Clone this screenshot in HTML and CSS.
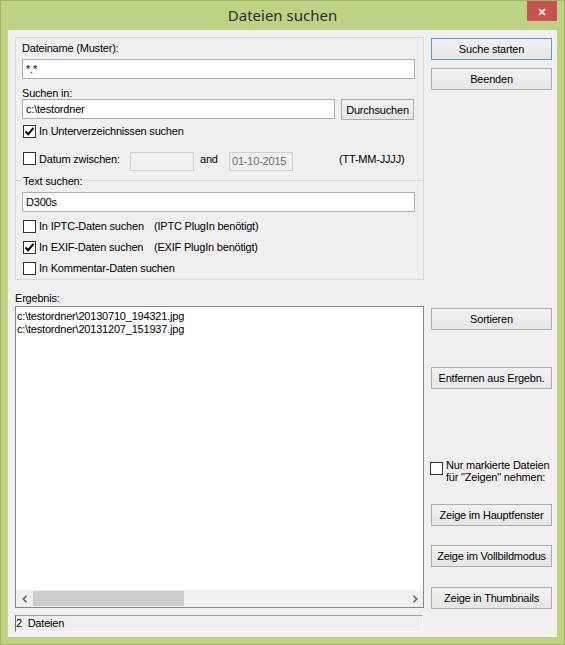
FILE: index.html
```html
<!DOCTYPE html>
<html lang="de">
<head>
<meta charset="utf-8">
<title>Dateien suchen</title>
<link rel="stylesheet" href="styles.css">
</head>
<body>
<div class="window">
  <div class="titlebar">
    <div></div>
    <div class="title">Dateien suchen</div>
    <div class="close"><svg width="8" height="8" viewBox="0 0 8 8"><path d="M1 1L7 7M7 1L1 7" stroke="#fff" stroke-width="1.7" fill="none"/></svg></div>
  </div>
  <div class="client">
    <div class="leftcol">
      <div class="panel">
        <div class="lbl l1">Dateiname (Muster):</div>
        <div class="input full i1">*.*</div>
        <div class="lbl l2">Suchen in:</div>
        <div class="row r-path">
          <div class="input path">c:\testordner</div>
          <div class="btn browse">Durchsuchen</div>
        </div>
        <div class="check r-sub">
          <span class="box"><svg width="11" height="11" viewBox="0 0 11 11"><path d="M1.5 5.5L4.2 8.2L9.5 1.8" stroke="#000" stroke-width="2" fill="none"/></svg></span>
          <span class="ctext">In Unterverzeichnissen suchen</span>
        </div>
        <div class="row r-date">
          <span class="box"></span>
          <span class="dlabel">Datum zwischen:</span>
          <div class="date"></div>
          <span class="and">and</span>
          <div class="date">01-10-2015</div>
          <span class="fmt">(TT-MM-JJJJ)</span>
        </div>
        <div class="sep"><span class="septext">Text suchen:</span></div>
        <div class="input full i3">D300s</div>
        <div class="check r-c1">
          <span class="box"></span>
          <span class="ctext wide">In IPTC-Daten suchen</span>
          <span class="ctext">(IPTC PlugIn benötigt)</span>
        </div>
        <div class="check r-c2">
          <span class="box"><svg width="11" height="11" viewBox="0 0 11 11"><path d="M1.5 5.5L4.2 8.2L9.5 1.8" stroke="#000" stroke-width="2" fill="none"/></svg></span>
          <span class="ctext wide">In EXIF-Daten suchen</span>
          <span class="ctext">(EXIF PlugIn benötigt)</span>
        </div>
        <div class="check r-c2">
          <span class="box"></span>
          <span class="ctext">In Kommentar-Daten suchen</span>
        </div>
      </div>
      <div class="lbl erg">Ergebnis:</div>
      <div class="list">
        <div class="items">
          <div>c:\testordner\20130710_194321.jpg</div>
          <div>c:\testordner\20131207_151937.jpg</div>
        </div>
        <div class="hscroll">
          <div class="arrow"><svg width="6" height="8" viewBox="0 0 6 8"><path d="M4.5 0.8L1.3 4L4.5 7.2" stroke="#606060" stroke-width="1.6" fill="none"/></svg></div>
          <div class="thumb"></div>
          <div class="track"></div>
          <div class="arrow"><svg width="6" height="8" viewBox="0 0 6 8"><path d="M1.5 0.8L4.7 4L1.5 7.2" stroke="#606060" stroke-width="1.6" fill="none"/></svg></div>
        </div>
      </div>
      <div class="status">2&nbsp; Dateien</div>
    </div>
    <div class="rightcol">
      <div class="btn side default b-start">Suche starten</div>
      <div class="btn side b-end">Beenden</div>
      <div class="btn side b-sort">Sortieren</div>
      <div class="btn side b-remove">Entfernen aus Ergebn.</div>
      <div class="onlymarked">
        <span class="box"></span>
        <span class="mtext">Nur markierte Dateien<br>für "Zeigen" nehmen:</span>
      </div>
      <div class="btn side b-main">Zeige im Hauptfenster</div>
      <div class="btn side b-full">Zeige im Vollbildmodus</div>
      <div class="btn side b-thumb">Zeige in Thumbnails</div>
    </div>
  </div>
</div>
</body>
</html>
```

FILE: styles.css
```css
* { box-sizing: border-box; }

html, body {
  margin: 0;
  padding: 0;
  background: #bcd385;
}

.window {
  width: 565px;
  height: 645px;
  border: 1px solid #9fb664;
  background: #bcd385;
  display: flex;
  flex-direction: column;
  font-family: "Liberation Sans", Arial, sans-serif;
  font-size: 11px;
  letter-spacing: -0.2px;
  color: #000;
}

.titlebar {
  height: 29px;
  display: grid;
  grid-template-columns: 1fr auto 1fr;
  align-items: start;
}

.title {
  font-family: "Noto Sans", "Open Sans", sans-serif;
  font-size: 15px;
  letter-spacing: 0;
  color: #2b2b2b;
  line-height: 29px;
}

.close {
  justify-self: end;
  width: 30px;
  height: 20px;
  margin-right: 7px;
  background: #c75050;
  display: flex;
  align-items: center;
  justify-content: center;
  padding-top: 2px;
}

.close svg { display: block; }

.client {
  flex: 1;
  margin: 0 7px 7px 7px;
  background: #f0f0f0;
  display: flex;
  padding: 0 5px 0 7px;
  gap: 7px;
}

.leftcol {
  width: 409px;
  display: flex;
  flex-direction: column;
}

.panel {
  margin-top: 7px;
  height: 243px;
  border: 1px solid #d9d9d9;
  padding: 0 8px 0 6px;
  display: flex;
  flex-direction: column;
}

.lbl {
  line-height: 12px;
  height: 12px;
  white-space: nowrap;
}

.l1 { margin-top: 4px; }
.l2 { margin-top: 8px; }

.input {
  height: 20px;
  border: 1px solid #abadb3;
  background: #fff;
  padding: 0 3px;
  line-height: 18px;
  white-space: nowrap;
}

.full { width: 393px; }
.i1 { margin-top: 5px; }
.i3 { margin-top: 4px; }

.row {
  display: flex;
}

.r-path {
  margin-top: 0;
  align-items: flex-start;
}

.path { width: 313px; }

.btn {
  border: 1px solid #acacac;
  background: linear-gradient(#f2f2f2, #e6e6e6);
  display: flex;
  align-items: center;
  justify-content: center;
  white-space: nowrap;
}

.browse {
  margin-left: 6px;
  width: 73px;
  height: 21px;
}

.box {
  width: 13px;
  height: 13px;
  border: 1px solid #333;
  background: #fff;
  flex: none;
  display: flex;
  align-items: center;
  justify-content: center;
}

.box svg { display: block; }

.check {
  display: flex;
  align-items: center;
  height: 13px;
  padding-left: 1px;
}

.ctext {
  margin-left: 3px;
  line-height: 13px;
  white-space: nowrap;
}

.wide { width: 112px; }

.r-sub { margin-top: 5px; }

.r-date {
  margin-top: 14px;
  padding-left: 1px;
  align-items: flex-start;
}

.dlabel, .and, .fmt {
  margin-top: 1px;
  line-height: 13px;
  white-space: nowrap;
}

.dlabel { margin-left: 3px; width: 91px; }

.date {
  width: 64px;
  height: 19px;
  border: 1px solid #cfcfcf;
  background: #f0f0f0;
  color: #6d6d6d;
  line-height: 17px;
  padding: 0 2px;
  white-space: nowrap;
}

.and { margin-left: 6px; width: 29px; }
.fmt { margin-left: 46px; }

.sep {
  margin: 4px -8px 0 -6px;
  display: flex;
  align-items: flex-start;
  height: 13px;
}

.sep::before, .sep::after {
  content: "";
  height: 1px;
  background: #d9d9d9;
  margin-top: 5px;
}

.sep::before { width: 5px; margin-right: 2px; }
.sep::after { flex: 1; margin-left: 2px; }

.septext {
  line-height: 13px;
  white-space: nowrap;
}

.r-c1 { margin-top: 8px; }
.r-c2 { margin-top: 8px; }

.erg { margin-top: 12px; }

.list {
  margin-top: 2px;
  height: 302px;
  border: 1px solid #828790;
  background: #fff;
  display: flex;
  flex-direction: column;
}

.items {
  flex: 1;
  padding: 3px 0 0 1px;
  line-height: 13px;
  white-space: nowrap;
}

.hscroll {
  height: 17px;
  background: #f0f0f0;
  display: flex;
}

.arrow {
  width: 17px;
  display: flex;
  align-items: center;
  justify-content: center;
}

.thumb {
  width: 151px;
  margin: 1px 0;
  background: #cdcdcd;
}

.track { flex: 1; }

.status {
  margin-top: 7px;
  height: 17px;
  width: 408px;
  border-top: 1px solid #a0a0a0;
  border-left: 1px solid #696969;
  border-right: 1px solid #fff;
  border-bottom: 1px solid #fff;
  line-height: 15px;
  white-space: nowrap;
}

.rightcol {
  width: 121px;
  display: flex;
  flex-direction: column;
}

.side { height: 22px; }

.default { border-color: #4a9fe6; }

.b-start { margin-top: 8px; }
.b-end { margin-top: 8px; }
.b-sort { margin-top: 218px; }
.b-remove { margin-top: 37px; }

.onlymarked {
  margin-top: 70px;
  margin-left: -1px;
  display: flex;
  align-items: flex-start;
}

.onlymarked .box { margin-top: 3px; }

.mtext {
  margin-left: 3px;
  line-height: 12px;
  white-space: nowrap;
}

.b-main { margin-top: 21px; }
.b-full { margin-top: 19px; }
.b-thumb { margin-top: 20px; }
```
